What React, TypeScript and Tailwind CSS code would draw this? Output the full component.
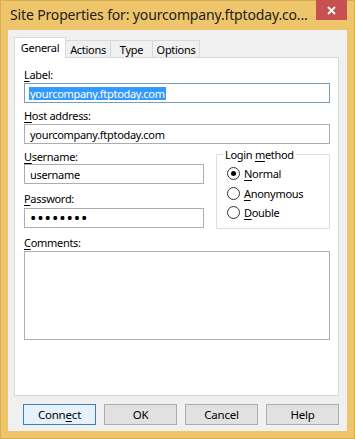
import React from 'react';

const Mn: React.FC<{ children: React.ReactNode }> = ({ children }) => (
  <span className="underline underline-offset-[2px] decoration-[1px]">{children}</span>
);

const Field: React.FC<{ focused?: boolean; className?: string; children?: React.ReactNode }> = ({ focused, className = '', children }) => (
  <div
    className={`h-[20px] border bg-white flex items-center pl-[4px] ${focused ? 'border-[#7a9cc4]' : 'border-[#abadb3]'} ${className}`}
  >
    {children}
  </div>
);

const Radio: React.FC<{ checked?: boolean; children: React.ReactNode }> = ({ checked, children }) => (
  <div className="flex items-center h-[19.5px] pl-[10px]">
    <span className="w-[13px] h-[13px] rounded-full border border-[#333333] bg-white flex items-center justify-center">
      {checked && <span className="w-[5px] h-[5px] rounded-full bg-black" />}
    </span>
    <span className="ml-[4px]">{children}</span>
  </div>
);

const Tab: React.FC<{ active?: boolean; w: string; children: React.ReactNode }> = ({ active, w, children }) => (
  <div
    className={`${w} flex items-center justify-center border border-[#d9d9d9] border-b-0 -ml-px first:ml-0 ${
      active ? 'h-[21px] bg-white relative z-10 pb-[1px]' : 'h-[18px] bg-[#f0f0f0]'
    }`}
  >
    {children}
  </div>
);

const DialogButton: React.FC<{ primary?: boolean; children: React.ReactNode }> = ({ primary, children }) => (
  <button
    className={`w-[73px] h-[21px] border text-[11.5px] tracking-[-0.2px] leading-none ${
      primary ? 'border-[#3c7fb1] bg-[#e5f1fb]' : 'border-[#adadad] bg-[#e1e1e1]'
    }`}
  >
    {children}
  </button>
);

export default function App() {
  return (
    <div className="w-[355px] h-[439px] bg-[#eec56b] border border-[#d9ab52] flex flex-col font-['Noto_Sans',sans-serif] text-black">
      {/* title bar */}
      <div className="h-[29px] flex items-start">
        <div className="pl-[9px] pt-[4px] text-[14px] leading-[20px] text-[#222] whitespace-nowrap tracking-[-0.15px]">
          Site Properties for: yourcompany.ftptoday.co...
        </div>
        <div className="ml-auto mr-[7px] -mt-px w-[31px] h-[20px] bg-[#c75050] flex items-center justify-center">
          <svg width="9" height="9" viewBox="0 0 9 9">
            <path d="M1 1 L8 8 M8 1 L1 8" stroke="#fff" strokeWidth="1.8" />
          </svg>
        </div>
      </div>

      {/* client area */}
      <div className="flex-1 mx-[7px] mb-[7px] bg-[#f0f0f0] flex flex-col pl-[6px] pr-[8px] pt-[7px] text-[11px] leading-[15px] tracking-[-0.3px]">
        <div className="flex items-end h-[21px] -mb-px">
          <Tab active w="w-[52px]">General</Tab>
          <Tab w="w-[46px]">Actions</Tab>
          <Tab w="w-[43px]">Type</Tab>
          <Tab w="w-[48px]">Options</Tab>
        </div>

        <div className="h-[339px] bg-white border border-[#d9d9d9] pl-[9px] pr-[8px] pt-[9px] flex flex-col">
          <div>
            <Mn>L</Mn>abel:
          </div>
          <Field focused className="mt-[1px]">
            <span className="bg-[#3399ff] text-white px-[1px] leading-[13px]">yourcompany.ftptoday.com</span>
          </Field>

          <div className="mt-[5px]">
            <Mn>H</Mn>ost address:
          </div>
          <Field className="mt-[1px]">
            <span className="pl-[1px]">yourcompany.ftptoday.com</span>
          </Field>

          <div className="flex mt-[5px]">
            <div className="w-[180px] flex flex-col">
              <div>
                <Mn>U</Mn>sername:
              </div>
              <Field>
                <span className="pl-[1px]">username</span>
              </Field>
              <div className="mt-[7px]">
                <Mn>P</Mn>assword:
              </div>
              <Field className="mt-[2px]">
                <span className="pl-[1px] text-[17px] leading-[18px] tracking-[0.9px]">••••••••</span>
              </Field>
            </div>
            <fieldset className="ml-auto w-[114px] h-[82px] -mt-[2px] border border-[#d5dfe5] rounded-[1px]">
              <legend className="ml-[6px] px-[2px]">
                Login <Mn>m</Mn>ethod
              </legend>
              <div className="mt-[2px]">
                <Radio checked>
                  <Mn>N</Mn>ormal
                </Radio>
                <Radio>
                  <Mn>A</Mn>nonymous
                </Radio>
                <Radio>
                  <Mn>D</Mn>ouble
                </Radio>
              </div>
            </fieldset>
          </div>

          <div className="mt-[6px]">
            <Mn>C</Mn>omments:
          </div>
          <div className="mt-[1px] h-[89px] border border-[#abadb3] bg-white" />
        </div>

        <div className="flex gap-[8px] pl-[9px] mt-[8px]">
          <DialogButton primary>
            Conn<Mn>e</Mn>ct
          </DialogButton>
          <DialogButton>OK</DialogButton>
          <DialogButton>Cancel</DialogButton>
          <DialogButton>Help</DialogButton>
        </div>
      </div>
    </div>
  );
}
